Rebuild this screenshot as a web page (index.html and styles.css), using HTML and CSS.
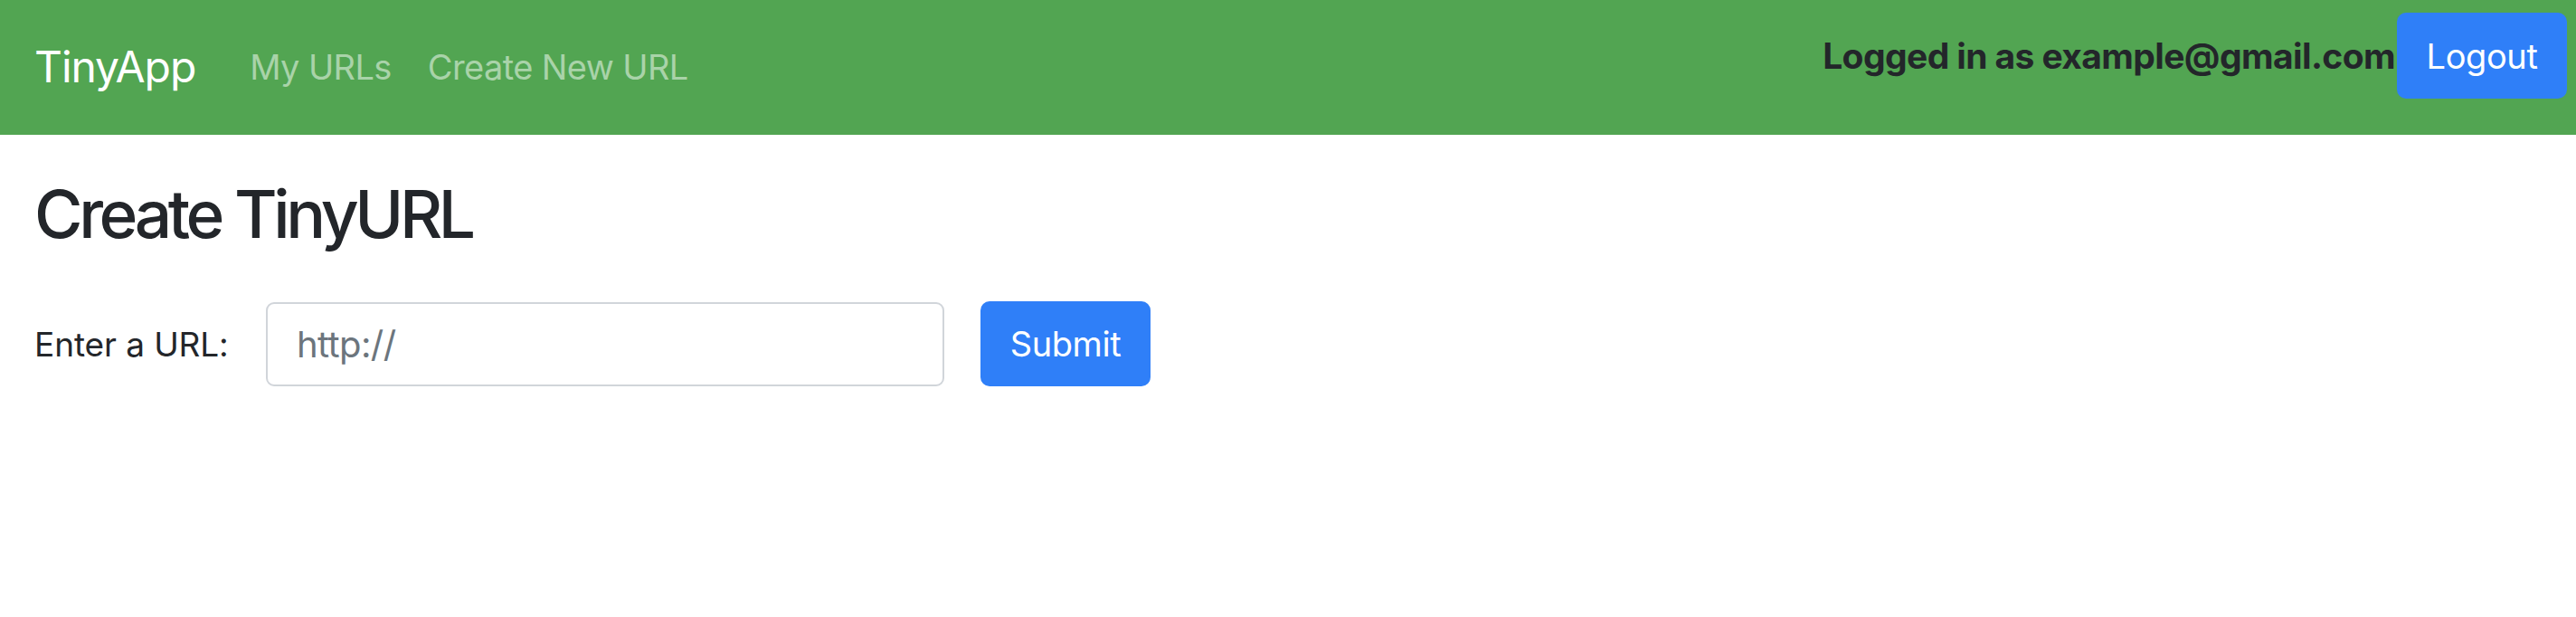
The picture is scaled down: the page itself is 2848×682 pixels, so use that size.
FILE: index.html
```html
<!DOCTYPE html>
<html lang="en">
<head>
<meta charset="utf-8">
<title>TinyApp</title>
<link rel="stylesheet" href="styles.css">
</head>
<body>
<nav class="navbar">
  <div class="nav-left">
    <a class="brand" href="#">TinyApp</a>
    <a class="nav-link" href="#">My URLs</a>
    <a class="nav-link" href="#">Create New URL</a>
  </div>
  <div class="nav-right">
    <span class="logged">Logged in as example@gmail.com</span>
    <button class="btn btn-logout" type="button">Logout</button>
  </div>
</nav>
<main class="content">
  <h1 class="title">Create TinyURL</h1>
  <form class="url-form">
    <label class="form-label" for="longURL">Enter a URL:</label>
    <input class="form-input" id="longURL" type="text" placeholder="http://">
    <button class="btn btn-submit" type="submit">Submit</button>
  </form>
</main>
</body>
</html>
```

FILE: styles.css
```css
* { box-sizing: border-box; }
html, body { margin: 0; padding: 0; background: #fff; }
body {
  font-family: Inter, "Noto Sans", "Liberation Sans", sans-serif;
  color: #23262a;
}
.navbar {
  height: 149px;
  background: #52a552;
  display: flex;
  justify-content: space-between;
  padding: 0 10px 0 38px;
}
.nav-left {
  display: flex;
  align-items: center;
  align-self: center;
  padding-bottom: 2px;
}
.brand {
  color: #fff;
  text-decoration: none;
  font-size: 48px;
  letter-spacing: -1.1px;
  margin-right: 60px;
}
.nav-link {
  color: #a9d3a9;
  text-decoration: none;
  font-size: 38px;
  letter-spacing: -0.6px;
  margin-right: 40px;
}
.nav-right {
  display: flex;
  align-items: center;
  align-self: flex-start;
  margin-top: 14px;
}
.logged {
  font-weight: 700;
  font-size: 39px;
  letter-spacing: -0.6px;
  color: #23262a;
  margin-right: 2px;
}
.btn {
  border: none;
  color: #fff;
  background: #2f7ff8;
  font-family: inherit;
  border-radius: 10px;
  cursor: pointer;
}
.btn-logout {
  width: 188px;
  height: 95px;
  font-size: 38px;
  letter-spacing: -0.4px;
}
.content { padding: 41px 38px 0; }
.title {
  margin: 0;
  font-weight: 500;
  font-size: 73px;
  line-height: 1.28;
  letter-spacing: -4.4px;
  color: #23262a;
}
.url-form {
  display: flex;
  align-items: center;
  margin-top: 50px;
}
.form-label {
  font-size: 37px;
  letter-spacing: -0.1px;
  width: 256px;
}
.form-input {
  width: 750px;
  height: 93px;
  border: 2px solid #d1d5da;
  border-radius: 9px;
  padding: 0 0 0 32px;
  font-family: inherit;
  font-size: 40px;
  letter-spacing: -0.6px;
  color: #495057;
  outline: none;
}
.form-input::placeholder { color: #6c757d; }
.btn-submit {
  margin-left: 40px;
  width: 188px;
  height: 94px;
  font-size: 38px;
  letter-spacing: -0.4px;
}
```
